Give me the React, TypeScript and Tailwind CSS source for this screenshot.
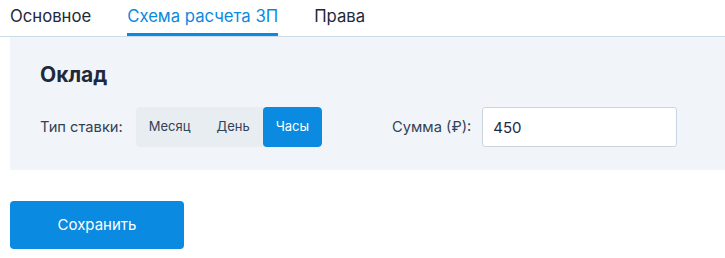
import { useState } from "react";

const tabs = ["Основное", "Схема расчета ЗП", "Права"];
const rates = ["Месяц", "День", "Часы"];

export default function App() {
  const [tab, setTab] = useState(1);
  const [rate, setRate] = useState(2);
  const [sum, setSum] = useState("450");

  return (
    <div className="w-[725px] h-[258px] bg-white font-['Inter',sans-serif] text-[#1e293b]">
      <div className="flex gap-[36px] pl-[10px] border-b border-[#cfdbe6]">
        {tabs.map((t, i) => (
          <button
            key={t}
            onClick={() => setTab(i)}
            className={
              "pt-1 pb-[5px] text-[16.7px] leading-6 border-b-[3px] " +
              (tab === i ? "border-[#0a8ae0] text-[#0a8ae0]" : "border-transparent text-[#1e293b]")
            }
          >
            {t}
          </button>
        ))}
      </div>

      <div className="ml-[10px] bg-[#f1f5f9] pl-[30px] pt-[24px] pb-[23px]">
        <h2 className="text-[21px] leading-7 font-bold text-[#1e293b] mb-[18px]">Оклад</h2>
        <div className="flex items-center">
          <span className="text-[14.7px] text-[#334155] mr-[13px]">Тип ставки:</span>
          <div className="flex h-10 rounded bg-[#e8edf2] overflow-hidden">
            {rates.map((r, i) => (
              <button
                key={r}
                onClick={() => setRate(i)}
                className={
                  "px-[13px] text-[13px] " +
                  (rate === i ? "bg-[#0a8ae0] text-white rounded" : "text-[#334155]")
                }
              >
                {r}
              </button>
            ))}
          </div>
          <span className="ml-[70px] text-[14.7px] text-[#334155] mr-[11px]">Сумма (₽):</span>
          <input
            value={sum}
            onChange={(e) => setSum(e.target.value)}
            className="w-[195px] h-10 bg-white border border-[#cbd5e1] rounded-[3px] px-[10px] text-[15px] text-[#1e293b] outline-none"
          />
        </div>
      </div>

      <button className="ml-[10px] mt-[31px] w-[174px] h-12 rounded bg-[#0a8ae0] text-white text-[15px]">
        Сохранить
      </button>
    </div>
  );
}
